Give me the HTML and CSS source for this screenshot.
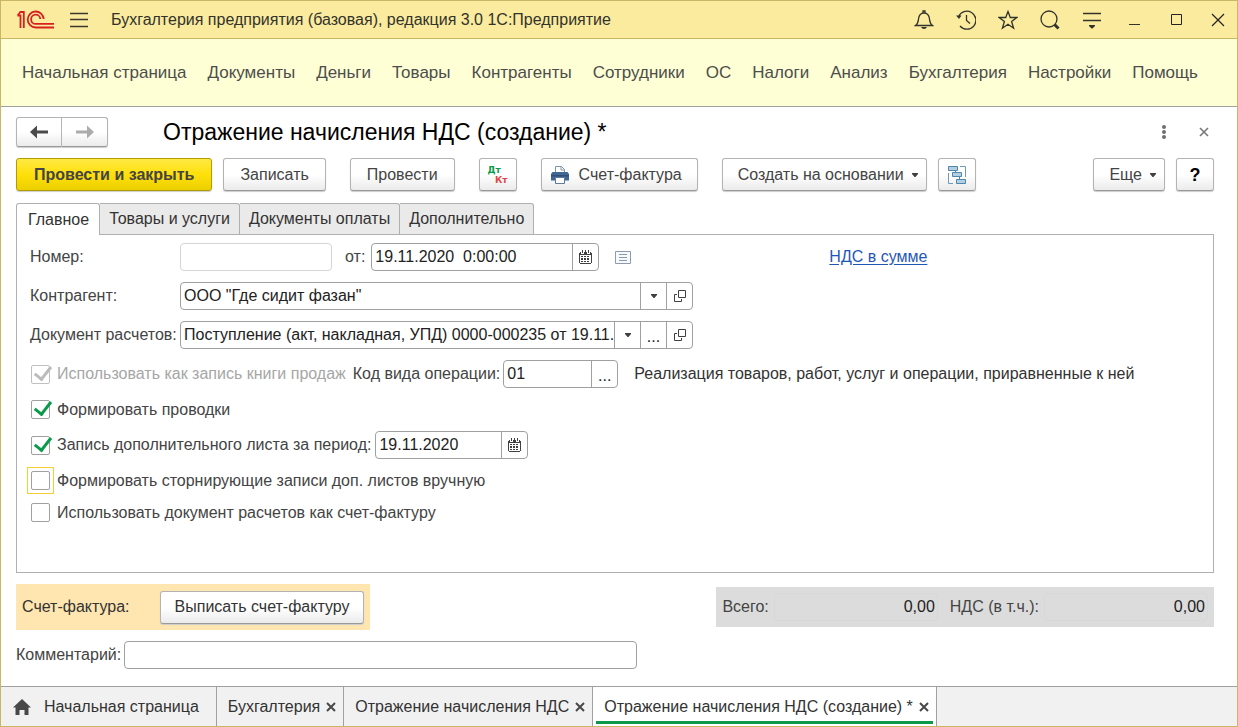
FILE: index.html
```html
<!DOCTYPE html>
<html lang="ru">
<head>
<meta charset="utf-8">
<title>Отражение начисления НДС (создание)</title>
<link rel="stylesheet" href="styles.css">
</head>
<body>
<svg class="sprite" aria-hidden="true">
  <symbol id="i-cal" viewBox="0 0 13 14"><g shape-rendering="crispEdges"><path d="M1 2h11v1h1v10h-1v1H1v-1H0V3h1z" fill="#404040"/><path d="M2 0h3v4H2zM8 0h3v4H8z" fill="#fff"/><path d="M3 0h1v3H3zM9 0h1v3H9zM6 0h1v2H6z" fill="#404040"/><path d="M1 5h11v8H1z" fill="#fff"/><path d="M2 6h2v1H2zM5 6h2v1H5zM8 6h2v1H8zM2 8h2v2H2zM5 8h2v2H5zM8 8h2v2H8zM2 11h2v1H2zM5 11h2v1H5zM8 11h2v1H8z" fill="#404040"/></g></symbol>
  <symbol id="i-open" viewBox="0 0 12 12"><path d="M4.500 .5h7v7h-7z M3 4.500H.5v7h7V9" fill="none" stroke="#404040"/></symbol>
  <symbol id="i-down" viewBox="0 0 6 4"><path d="M0 0h6v1L3.500 4h-1L0 1z" fill="#404040"/></symbol>
  <symbol id="i-x" viewBox="0 0 10 10"><path d="M1 1l8 8M9 1l-8 8" fill="none" stroke="#484848" stroke-width="2"/></symbol>
</svg>

<header class="titlebar">
  <svg class="logo" width="37" height="20" viewBox="0 0 37 20" role="img" aria-label="1С"><g fill="none" stroke="#d8201f" stroke-width="1.800"><path d="M.5 5.500h3V18M2.500 2h4.300v16M.5 5.500l3-3.500"/><path d="M26.700 9A8 8 0 1 0 18.700 17.500H37"/><path d="M23.300 9A4.600 4.600 0 1 0 18.700 13.900H37"/></g></svg>
  <button class="plain" aria-label="Меню"><svg width="18" height="16" viewBox="0 0 18 16"><path d="M0 1.500h18M0 7.500h18M0 14.500h18" stroke="#3c3a30" stroke-width="1.300"/></svg></button>
  <span class="app-name">Бухгалтерия предприятия (базовая), редакция 3.0 1С:Предприятие</span>
  <div class="window-tools">
    <button class="plain" aria-label="Уведомления"><svg width="20" height="20" viewBox="0 0 20 20" fill="none" stroke="#33332c" stroke-width="1.300"><path d="M1.500 15.500c2.500-1.500 2.500-3 3-6.500.5-4 2-6 5.500-6s5 2 5.500 6c.5 3.500.5 5 3 6.500z"/><path d="M9 3V1h2v2"/><path d="M7 17h6q-1 2-3 2t-3-2z" fill="#33332c" stroke="none"/></svg></button>
    <button class="plain" aria-label="История"><svg width="20" height="20" viewBox="0 0 20 20" fill="none" stroke="#33332c" stroke-width="1.300"><path d="M2.500 7A9 9 0 1 1 4 16"/><path d="M10.500 5v5.500l3.500 3"/><path d="M0 5.500h5.500L3 9z" fill="#33332c" stroke="none"/></svg></button>
    <button class="plain" aria-label="Избранное"><svg width="20" height="20" viewBox="0 0 20 20" fill="none" stroke="#33332c" stroke-width="1.300"><path d="M10 1.500l2.300 6h6.500l-5.200 4 2 6.700-5.600-4-5.600 4 2-6.700-5.200-4h6.500z"/></svg></button>
    <button class="plain" aria-label="Поиск"><svg width="20" height="20" viewBox="0 0 20 20" fill="none" stroke="#33332c"><circle cx="9" cy="9" r="8" stroke-width="1.300"/><path d="M14.500 14.500l4 4" stroke-width="3"/></svg></button>
    <button class="plain" aria-label="Настройка"><svg width="20" height="20" viewBox="0 0 20 20"><path d="M1 3.500h18M1 10.500h18" stroke="#33332c" stroke-width="1.300"/><path d="M7 15h6v1l-2.500 2.500h-1L7 16z" fill="#33332c"/></svg></button>
    <button class="plain" aria-label="Свернуть"><svg width="20" height="20" viewBox="0 0 20 20"><path d="M5 14.500h11" stroke="#33332c"/></svg></button>
    <button class="plain" aria-label="Развернуть"><svg width="20" height="20" viewBox="0 0 20 20"><path d="M5.500 4.500h10v10h-10z" fill="none" stroke="#222"/></svg></button>
    <button class="plain" aria-label="Закрыть окно"><svg width="20" height="20" viewBox="0 0 20 20"><path d="M4 4l12 12M16 4L4 16" stroke="#222" stroke-width="1.200"/></svg></button>
  </div>
</header>

<nav class="menu">
  <a href="#">Начальная страница</a><a href="#">Документы</a><a href="#">Деньги</a><a href="#">Товары</a><a href="#">Контрагенты</a><a href="#">Сотрудники</a><a href="#">ОС</a><a href="#">Налоги</a><a href="#">Анализ</a><a href="#">Бухгалтерия</a><a href="#">Настройки</a><a href="#">Помощь</a>
</nav>

<main class="content">
  <div class="heading">
    <div class="history">
      <button aria-label="Назад"><svg width="18" height="14" viewBox="0 0 18 14"><path d="M0 7l7-6.500V5.500h11v3H7v5z" fill="#4a4a4a"/></svg></button>
      <button aria-label="Вперед"><svg width="18" height="14" viewBox="0 0 18 14"><path d="M18 7l-7-6.500V5.500H0v3h11v5z" fill="#acacac"/></svg></button>
    </div>
    <h1>Отражение начисления НДС (создание) *</h1>
    <button class="plain" aria-label="Действия"><svg width="6" height="14" viewBox="0 0 6 14" fill="#6e6e6e"><circle cx="3" cy="2" r="2"/><circle cx="3" cy="7" r="2"/><circle cx="3" cy="12" r="2"/></svg></button>
    <button class="plain" aria-label="Закрыть"><svg width="10" height="10" viewBox="0 0 10 10"><path d="M1 1l8 8M9 1l-8 8" stroke="#777" stroke-width="1.600"/></svg></button>
  </div>

  <div class="toolbar">
    <div class="group"><button class="btn primary">Провести и закрыть</button><button class="btn">Записать</button></div>
    <button class="btn">Провести</button>
    <button class="btn square dtkt" aria-label="Дт Кт"><span class="dt">Дт</span><span class="kt">Кт</span></button>
    <button class="btn with-icon"><svg width="18" height="18" viewBox="0 0 18 18"><path d="M4.500 6V.5h6l3 3V6" fill="#fff" stroke="#8394a8"/><path d="M10 .5V4h3.500" fill="none" stroke="#8394a8"/><path d="M1.500 6h15L18 8v6.500H0V8z" fill="#426795"/><path d="M0 9h18v1.500H0z" fill="#2f4f77"/><path d="M4.500 11.500h9v6h-9z" fill="#fff" stroke="#62799a"/></svg>Счет-фактура</button>
    <div class="group"><button class="btn drop">Создать на основании<svg width="6" height="4"><use href="#i-down"/></svg></button>
    <button class="btn square" aria-label="Структура подчиненности"><svg width="18" height="18" viewBox="0 0 18 18" fill="none" stroke="#4f86ad"><path d="M12 .5h5.500V11M.5 7v10.500H5" stroke="#6c9cbd"/><path d="M.5 .5h9v4h-9zM4.500 6.500h9v4h-9zM8.500 13.500h9v4h-9z" fill="#b4cfe2"/><path d="M7.500 4.500v2M11.500 10.500v3"/></svg></button></div>
    <div class="group end"><button class="btn drop">Еще<svg width="6" height="4"><use href="#i-down"/></svg></button><button class="btn square help">?</button></div>
  </div>

  <div class="tabs" role="tablist">
    <button class="tab active" role="tab" aria-selected="true">Главное</button><button class="tab" role="tab">Товары и услуги</button><button class="tab" role="tab">Документы оплаты</button><button class="tab" role="tab">Дополнительно</button>
  </div>

  <section class="panel">
    <div class="row">
      <label class="name" for="num">Номер:</label>
      <input class="box muted" id="num" type="text">
      <label class="from" for="date">от:</label>
      <div class="field date-time"><input id="date" type="text" value="19.11.2020&nbsp; 0:00:00"><button aria-label="Календарь"><svg width="13" height="14"><use href="#i-cal"/></svg></button></div>
      <svg class="list-icon" width="16" height="13" viewBox="0 0 16 13"><path d="M.5 .5h15v12H.5z" fill="#f7fafc" stroke="#8c9bb0"/><path d="M4 3.500h8M4 6.500h8M4 9.500h8" stroke="#8c9bb0"/></svg>
      <a class="link" href="#">НДС в сумме</a>
    </div>
    <div class="row">
      <label class="name" for="partner">Контрагент:</label>
      <div class="field wide"><input id="partner" type="text" value="ООО &quot;Где сидит фазан&quot;"><button aria-label="Список"><svg width="6" height="4"><use href="#i-down"/></svg></button><button aria-label="Открыть"><svg width="12" height="12"><use href="#i-open"/></svg></button></div>
    </div>
    <div class="row">
      <label class="name" for="doc">Документ расчетов:</label>
      <div class="field wide"><input id="doc" type="text" value="Поступление (акт, накладная, УПД) 0000-000235 от 19.11.2020"><button aria-label="Список"><svg width="6" height="4"><use href="#i-down"/></svg></button><button class="dots">...</button><button aria-label="Открыть"><svg width="12" height="12"><use href="#i-open"/></svg></button></div>
    </div>
    <div class="row">
      <label class="check off"><input type="checkbox" checked disabled>Использовать как запись книги продаж</label>
      <label class="code" for="code">Код вида операции:</label>
      <div class="field code-field"><input id="code" type="text" value="01"><button class="dots">...</button></div>
      <span class="note">Реализация товаров, работ, услуг и операции, приравненные к ней</span>
    </div>
    <div class="row"><label class="check"><input type="checkbox" checked>Формировать проводки</label></div>
    <div class="row">
      <label class="check"><input type="checkbox" checked>Запись дополнительного листа за период:</label>
      <div class="field period"><input type="text" aria-label="Период" value="19.11.2020"><button aria-label="Календарь"><svg width="13" height="14"><use href="#i-cal"/></svg></button></div>
    </div>
    <div class="row"><label class="check"><span class="focused"><input type="checkbox"></span>Формировать сторнирующие записи доп. листов вручную</label></div>
    <div class="row"><label class="check"><input type="checkbox">Использовать документ расчетов как счет-фактуру</label></div>
  </section>

  <div class="summary">
    <div class="invoice"><span>Счет-фактура:</span><button class="btn">Выписать счет-фактуру</button></div>
    <div class="totals">
      <label for="total">Всего:</label><input id="total" type="text" value="0,00" readonly>
      <label class="vat" for="vat">НДС (в т.ч.):</label><input id="vat" type="text" value="0,00" readonly>
    </div>
  </div>
  <div class="comment"><label for="comment">Комментарий:</label><input class="box" id="comment" type="text"></div>
</main>

<footer class="taskbar">
  <a class="task home" href="#"><svg width="18" height="16" viewBox="0 0 18 16"><path d="M9 0l9 8.500h-2.500V16h-4v-5h-5v5h-4V8.500H0z" fill="#484848"/></svg>Начальная страница</a>
  <div class="task"><a href="#">Бухгалтерия</a><button class="plain" aria-label="Закрыть"><svg width="10" height="10"><use href="#i-x"/></svg></button></div>
  <div class="task"><a href="#">Отражение начисления НДС</a><button class="plain" aria-label="Закрыть"><svg width="10" height="10"><use href="#i-x"/></svg></button></div>
  <div class="task current"><a href="#">Отражение начисления НДС (создание) *</a><button class="plain" aria-label="Закрыть"><svg width="10" height="10"><use href="#i-x"/></svg></button></div>
</footer>
</body>
</html>
```

FILE: styles.css
```css
* { box-sizing: border-box; }
body {
  margin: 0;
  min-height: 100vh;
  display: flex;
  flex-direction: column;
  border: 1px solid #c9b765;
  background: #fff;
  color: #444;
  font: 16px/20px "Liberation Sans", Arial, sans-serif;
}
button, input { font: inherit; color: inherit; margin: 0; }
a { color: inherit; text-decoration: none; }
svg { display: block; flex: none; }
.sprite { position: absolute; width: 0; height: 0; }
.plain { border: 0; padding: 0; background: none; }

.titlebar {
  display: flex;
  align-items: center;
  height: 38px;
  padding: 0 9px 0 16px;
  background: #faeb9e;
  border-bottom: 1px solid #c9b765;
  color: #33332c;
}
.logo { margin-right: 16px; }
.app-name { margin-left: 23px; }
.window-tools { display: flex; gap: 22px; margin-left: auto; }

.menu {
  display: flex;
  align-items: center;
  gap: 21px;
  height: 68px;
  padding: 0 21px;
  background: #ffffd5;
  border-bottom: 1px solid #a0a0a0;
  color: #4d4d4d;
  font-size: 17px;
  white-space: nowrap;
}

.content { flex: 1; padding: 9px 23px 16px 15px; }
.heading { display: flex; align-items: center; height: 31px; padding-right: 5px; gap: 32px; }
.heading h1 { flex: 1; margin: 0 0 0 23px; font-size: 23px; line-height: 28px; font-weight: 400; color: #000; }
.history { display: flex; }
.history button, .btn {
  border: 1px solid #b3b3b3;
  border-bottom-color: #999;
  border-radius: 3px;
  background: linear-gradient(#fff 50%, #ebebeb);
  box-shadow: 0 1px 1px #ccc;
}
.history button { width: 46px; height: 30px; padding: 0; display: flex; align-items: center; justify-content: center; }
.history button:first-child { border-radius: 3px 0 0 3px; }
.history button:last-child { border-radius: 0 3px 3px 0; border-left: 0; }

.toolbar { display: flex; gap: 24px; margin-top: 11px; }
.group { display: flex; gap: 11px; }
.end { margin-left: auto; }
.btn { display: flex; align-items: center; justify-content: center; height: 33px; padding: 0 16px; white-space: nowrap; }
.primary { padding: 0 17px; font-weight: 700; border-color: #b39b00; background: linear-gradient(#ffe944, #ffe00a 50%, #ebcf00); }
.square { width: 38px; padding: 0; }
.with-icon { padding: 0 15px 0 9px; gap: 10px; }
.drop { padding: 0 8px 0 15px; gap: 8px; }
.help { font-size: 18px; color: #000; font-weight: 700; }
.dtkt { flex-direction: column; align-items: stretch; padding: 0 8px; font: 700 9px/10px "DejaVu Sans", sans-serif; }
.dt { text-align: left; color: #0a9a4a; }
.kt { text-align: right; color: #e04646; }

.tabs { display: flex; margin-top: 12px; }
.tab {
  height: 31px;
  padding: 0 9px;
  border: 1px solid #b0b0b0;
  border-left-width: 0;
  border-bottom: 0;
  border-radius: 0 3px 0 0;
  background: #eaeaea;
  color: #333;
}
.tab.active { height: 32px; margin-bottom: -1px; padding: 0 10px 0 11px; border-left-width: 1px; border-radius: 3px 3px 0 0; background: #fff; z-index: 1; }

.panel { display: grid; gap: 11px; min-height: 339px; align-content: start; padding: 8px 13px; border: 1px solid #b0b0b0; }
.row { display: flex; align-items: center; min-height: 21px; white-space: nowrap; }
.name { width: 150px; }
.box, .field { height: 28px; border: 1px solid #a0a0a0; border-radius: 4px; background: #fff; color: #222; }
.box { padding: 0 4px; }
.muted { width: 152px; border-color: #d5d5d5; }
.from { margin: 0 6px 0 13px; }
.field { display: flex; overflow: hidden; }
.field input { flex: 1; min-width: 0; padding: 0 0 0 3px; border: 0; background: none; outline: 0; }
.field button { display: flex; align-items: center; justify-content: center; width: 26px; padding: 0; border: 0; border-left: 1px solid #a0a0a0; background: none; }
.field .dots { padding-top: 4px; }
.date-time { width: 228px; }
.wide { width: 513px; }
.code { margin: 0 3px 0 7px; }
.code-field { width: 115px; }
.note { margin-left: 16px; color: #333; }
.period { width: 153px; margin-left: 4px; }
.list-icon { margin-left: 16px; }
.link { margin-left: 198px; color: #1f57b8; text-decoration: underline; text-underline-offset: 2px; }
.check { display: flex; align-items: center; gap: 7px; }
.off { color: #a6a6a6; }
.check input {
  appearance: none;
  width: 19px;
  height: 19px;
  margin-left: 1px;
  border: 1px solid #a0a0a0;
  border-radius: 2px;
  position: relative;
}
.check input:checked::after {
  content: "";
  position: absolute;
  left: 6px;
  top: -3px;
  width: 7px;
  height: 14px;
  border: solid #0a9a4a;
  border-width: 0 3px 3px 0;
  transform: rotate(38deg);
}
.check input:disabled { border-color: #c0c0c0; }
.check input:disabled::after { border-color: #bbb; }
.focused { display: flex; margin: -3px -4px -3px -3px; padding: 3px 3px 3px 2px; border: 1px solid #f8cd30; }

.summary { display: flex; align-items: center; justify-content: space-between; margin-top: 11px; }
.invoice { display: flex; align-items: center; height: 46px; padding: 0 6px; gap: 30px; background: #ffe6b0; color: #333; }
.invoice .btn { padding: 0 14px; }
.totals { display: flex; align-items: center; height: 40px; padding: 0 6px; background: #dcdcdc; }
.totals input { width: 164px; height: 28px; margin-left: 5px; padding: 0 2px; border: 1px solid #d8d8d8; border-radius: 4px; background: none; color: #222; text-align: right; }
.vat { margin-left: 12px; }
.comment { display: flex; align-items: center; gap: 3px; margin-top: 11px; }
.comment .box { width: 513px; }

.taskbar { display: flex; height: 40px; border-top: 1px solid #a0a0a0; background: #f1f1f1; color: #333; white-space: nowrap; }
.task { display: flex; align-items: center; gap: 6px; padding: 0 7px 0 11px; border-right: 1px solid #a0a0a0; }
.home { gap: 13px; padding: 0 17px 0 12px; }
.current { position: relative; background: #fff; }
.current::after { content: ""; position: absolute; left: 3px; right: 3px; bottom: 2px; height: 3px; background: #0a9a4a; }
```
